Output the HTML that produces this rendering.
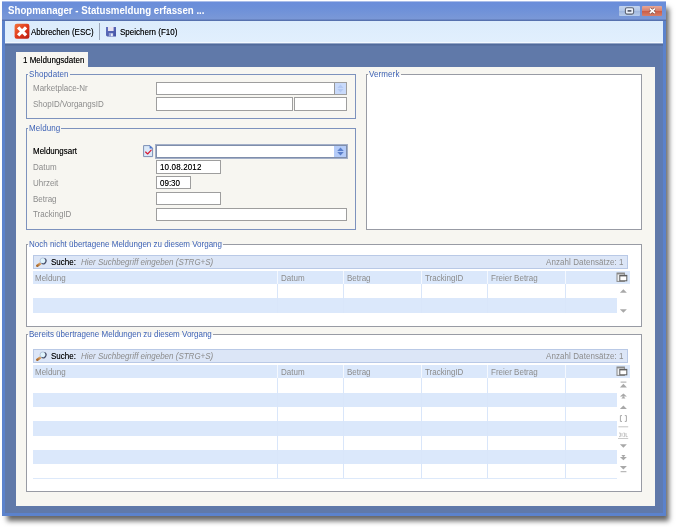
<!DOCTYPE html>
<html>
<head>
<meta charset="utf-8">
<title>Shopmanager - Statusmeldung erfassen ...</title>
<style>
html,body{margin:0;padding:0;}
body{width:677px;height:527px;background:#fff;position:relative;overflow:hidden;font-family:"Liberation Sans",sans-serif;font-size:8px;color:#000;}
div,span,svg{position:absolute;box-sizing:border-box;white-space:nowrap;}
.t{line-height:10px;height:10px;will-change:transform;transform:translateY(.6px) scaleY(1.07);transform-origin:50% 78%;}
#win{left:2px;top:1px;width:664px;height:515px;background:#5b82cc;box-shadow:4px 6px 5px -1px rgba(0,0,0,.6);}
#titlebar{left:2px;top:1px;width:664px;height:20px;background:linear-gradient(#a9bdea 0,#a9bdea 1px,#6a8dda 1px,#6b8fd9 6px,#7a98d7 18px,#5a75b2 19px,#526cab 20px);}
#title{will-change:transform;transform:scaleY(1.03);transform-origin:50% 75%;left:8.4px;top:4px;font-size:9.7px;font-weight:bold;color:#fff;line-height:14px;height:14px;}
#inner{left:5px;top:21px;width:658px;height:492px;background:#6079a9;}
#toolbar{left:5px;top:21px;width:658px;height:25px;background:linear-gradient(#dcecfc 0,#e1effd 21px,#f3f8fe 21px,#f3f8fe 22px,#94a7c8 22px,#94a7c8 23px,#4f6798 23px,#5b74a4 25px);}
#panel{left:16px;top:67px;width:639px;height:439px;background:#f7f6f1;}
#tab{left:16px;top:52px;width:72px;height:16px;background:#f7f6f1;}
.k{text-shadow:0 0 .3px rgba(0,0,0,.55);}
.gb{border:1px solid #7d92bd;}
.gl{color:#3f63b6;background:#f7f6f1;padding:0 1px;letter-spacing:.1px;}
.glw{background:linear-gradient(#f7f6f1 0,#f7f6f1 6px,#fff 6px);}
.lbl{color:#8c8c8c;}
.inp{background:#fff;border:1px solid #9e9e9e;}
.sbar{background:#dce6f7;border:1px solid #b9c9e6;}
.hdr{background:#dbe8fb;}
.brow{background:#dbe8fb;}
.vl{width:1px;background:#d9e6fa;}
.vlh{width:1px;background:#f4f8fe;}
.hl{height:1px;background:#dde9fa;}
</style>
</head>
<body>
<div id="win"></div>
<div id="titlebar"></div>
<div id="title">Shopmanager - Statusmeldung erfassen ...</div>
<div id="inner"></div>
<div style="left:660px;top:44px;width:3px;height:469px;background:#5e7bb2;"></div>
<div id="toolbar"></div>
<div id="tab"></div>
<div id="panel"></div>


<!-- window buttons -->
<div style="left:619px;top:6px;width:21px;height:10px;background:linear-gradient(#c3d4ee,#b3c7e8 45%,#9fb6de 50%,#b7cbea);border-radius:1px;"></div>
<svg style="left:619px;top:6px;" width="21" height="10" viewBox="0 0 21 10"><rect x="6.4" y="1.7" width="8.2" height="6.4" rx="1.6" fill="#e9eff9" stroke="#5e6473" stroke-width="1.1"/><rect x="8.6" y="4.1" width="3.8" height="1.6" fill="#4a5062"/></svg>
<div style="left:642px;top:6px;width:20px;height:10px;background:linear-gradient(#e7a898,#d98370 45%,#cb5a44 50%,#d67f6a);border-radius:1px;"></div>
<svg style="left:647px;top:6px;" width="10" height="10" viewBox="0 0 10 10"><path d="M2.9 2.6 L7.9 7.2 M7.9 2.6 L2.9 7.2" stroke="#7a453d" stroke-width="2.9" fill="none"/><path d="M2.9 2.6 L7.9 7.2 M7.9 2.6 L2.9 7.2" stroke="#fff" stroke-width="1.8" fill="none"/></svg>
<!-- toolbar content -->
<div class="t k" id="tb1" style="left:31px;top:27px;">Abbrechen (ESC)</div>
<div style="left:99px;top:23px;width:1px;height:17px;background:#9aa6b8;"></div>
<div class="t k" id="tb2" style="left:120px;top:27px;">Speichern (F10)</div>

<!-- tab -->
<div class="t k" id="tabt" style="left:23px;top:55px;">1 Meldungsdaten</div>

<!-- Shopdaten -->
<div class="gb" style="left:26px;top:74px;width:330px;height:45px;"></div>
<div class="t gl" id="g1" style="left:28px;top:69px;">Shopdaten</div>
<div class="t lbl" id="l1" style="left:33px;top:83px;">Marketplace-Nr</div>
<div class="t lbl" id="l2" style="left:33px;top:99px;">ShopID/VorgangsID</div>
<div class="inp" style="left:156px;top:82px;width:191px;height:13px;"></div>
<div style="left:334px;top:83px;width:12px;height:11px;background:#c9dafa;border-left:1px solid #979797;"></div>
<div class="inp" style="left:156px;top:97px;width:137px;height:14px;"></div>
<div class="inp" style="left:294px;top:97px;width:53px;height:14px;"></div>

<!-- Meldung -->
<div class="gb" style="left:26px;top:128px;width:330px;height:102px;"></div>
<div class="t gl" id="g2" style="left:28px;top:123px;">Meldung</div>
<div class="t k" id="l3" style="left:33px;top:146px;">Meldungsart</div>
<div class="t lbl" id="l4" style="left:33px;top:162px;">Datum</div>
<div class="t lbl" id="l5" style="left:33px;top:178px;">Uhrzeit</div>
<div class="t lbl" id="l6" style="left:33px;top:194px;">Betrag</div>
<div class="t lbl" id="l7" style="left:33px;top:209px;">TrackingID</div>
<div class="inp" style="left:155px;top:144px;width:193px;height:15px;border:1px solid #a3afc8;box-shadow:inset 0 0 0 1px #7f8eab;"></div>
<div style="left:334px;top:146px;width:12px;height:11px;background:#b4cbf8;"></div>
<div class="inp" style="left:156px;top:160px;width:65px;height:14px;"></div>
<div class="t k" id="v1" style="letter-spacing:.15px;left:160px;top:162px;">10.08.2012</div>
<div class="inp" style="left:156px;top:176px;width:35px;height:13px;"></div>
<div class="t k" id="v2" style="left:160px;top:178px;">09:30</div>
<div class="inp" style="left:156px;top:192px;width:65px;height:13px;"></div>
<div class="inp" style="left:156px;top:208px;width:191px;height:13px;"></div>

<!-- Vermerk -->
<div style="left:366px;top:74px;width:276px;height:156px;background:#fff;border:1px solid #989ba4;"></div>
<div class="t gl glw" id="g3" style="left:368px;top:69px;">Vermerk</div>

<!-- Group 3 -->
<div style="left:26px;top:244px;width:616px;height:83px;background:#fff;border:1px solid #989ba4;"></div>
<div class="t gl glw" id="g4" style="letter-spacing:0;left:28px;top:239px;">Noch nicht übertagene Meldungen zu diesem Vorgang</div>
<div class="sbar" style="left:33px;top:255px;width:595px;height:14px;"></div>
<div class="t k" id="s1" style="left:51px;top:257px;">Suche:</div>
<div class="t lbl" id="p1" style="left:81px;top:257px;font-style:italic;">Hier Suchbegriff eingeben (STRG+S)</div>
<div class="t lbl" id="a1" style="letter-spacing:.08px;left:546px;top:257px;">Anzahl Datensätze: 1</div>
<div class="hdr" style="left:33px;top:271px;width:597px;height:13px;"></div>
<div class="brow" style="left:33px;top:298px;width:584px;height:15px;"></div>
<div class="t lbl" style="left:35px;top:273px;">Meldung</div>
<div class="t lbl" style="left:281px;top:273px;">Datum</div>
<div class="t lbl" style="left:347px;top:273px;">Betrag</div>
<div class="t lbl" style="left:425px;top:273px;">TrackingID</div>
<div class="t lbl" style="left:491px;top:273px;">Freier Betrag</div>

<!-- Group 4 -->
<div style="left:26px;top:334px;width:616px;height:158px;background:#fff;border:1px solid #989ba4;"></div>
<div class="t gl glw" id="g5" style="letter-spacing:0;left:28px;top:329px;">Bereits übertragene Meldungen zu diesem Vorgang</div>
<div class="sbar" style="left:33px;top:349px;width:595px;height:14px;"></div>
<div class="t k" id="s2" style="left:51px;top:351px;">Suche:</div>
<div class="t lbl" id="p2" style="left:81px;top:351px;font-style:italic;">Hier Suchbegriff eingeben (STRG+S)</div>
<div class="t lbl" id="a2" style="letter-spacing:.08px;left:546px;top:351px;">Anzahl Datensätze: 1</div>
<div class="hdr" style="left:33px;top:365px;width:597px;height:13px;"></div>
<div class="brow" style="left:33px;top:393px;width:584px;height:14px;"></div>
<div class="brow" style="left:33px;top:421px;width:584px;height:15px;"></div>
<div class="brow" style="left:33px;top:450px;width:584px;height:14px;"></div>
<div class="hl" style="left:33px;top:478px;width:584px;"></div>
<div class="t lbl" style="left:35px;top:367px;">Meldung</div>
<div class="t lbl" style="left:281px;top:367px;">Datum</div>
<div class="t lbl" style="left:347px;top:367px;">Betrag</div>
<div class="t lbl" style="left:425px;top:367px;">TrackingID</div>
<div class="t lbl" style="left:491px;top:367px;">Freier Betrag</div>

<!-- table decorations -->
<svg style="left:35px;top:257px;" width="13" height="11" viewBox="0 0 13 11">
  <defs><linearGradient id="mh257" x1="1" y1="0" x2="0" y2="1"><stop offset="0" stop-color="#e0a868"/><stop offset="1" stop-color="#a8682c"/></linearGradient></defs>
  <path d="M5.4 6.4 L2.3 8.8" stroke="url(#mh257)" stroke-width="2.5" stroke-linecap="round"/>
  <circle cx="7.9" cy="3.8" r="2.9" fill="#dff4fc" stroke="#b4c4dc" stroke-width="1"/>
  <path d="M9.6 1.4 A2.9 2.9 0 0 1 6.6 6.4" stroke="#434a64" stroke-width="1.1" fill="none"/>
</svg>
<svg style="left:35px;top:351px;" width="13" height="11" viewBox="0 0 13 11">
  <defs><linearGradient id="mh351" x1="1" y1="0" x2="0" y2="1"><stop offset="0" stop-color="#e0a868"/><stop offset="1" stop-color="#a8682c"/></linearGradient></defs>
  <path d="M5.4 6.4 L2.3 8.8" stroke="url(#mh351)" stroke-width="2.5" stroke-linecap="round"/>
  <circle cx="7.9" cy="3.8" r="2.9" fill="#dff4fc" stroke="#b4c4dc" stroke-width="1"/>
  <path d="M9.6 1.4 A2.9 2.9 0 0 1 6.6 6.4" stroke="#434a64" stroke-width="1.1" fill="none"/>
</svg>
<svg style="left:616px;top:272px;" width="12" height="11" viewBox="0 0 12 11">
  <rect x="1" y="1" width="7.4" height="8.4" fill="#eef0f2" stroke="#8a8a8a" stroke-width="1"/>
  <rect x="1" y="1" width="7.4" height="1.4" fill="#8a8a8a"/>
  <rect x="3.8" y="3.4" width="7" height="5.4" fill="#fff" stroke="#5e5e5e" stroke-width="1"/>
  <rect x="3.8" y="3.2" width="7" height="1.2" fill="#5e5e5e"/>
</svg>
<svg style="left:616px;top:366px;" width="12" height="11" viewBox="0 0 12 11">
  <rect x="1" y="1" width="7.4" height="8.4" fill="#eef0f2" stroke="#8a8a8a" stroke-width="1"/>
  <rect x="1" y="1" width="7.4" height="1.4" fill="#8a8a8a"/>
  <rect x="3.8" y="3.4" width="7" height="5.4" fill="#fff" stroke="#5e5e5e" stroke-width="1"/>
  <rect x="3.8" y="3.2" width="7" height="1.2" fill="#5e5e5e"/>
</svg>
<div class="vlh" style="left:277px;top:271px;height:13px;"></div>
<div class="vlh" style="left:343px;top:271px;height:13px;"></div>
<div class="vlh" style="left:421px;top:271px;height:13px;"></div>
<div class="vlh" style="left:487px;top:271px;height:13px;"></div>
<div class="vlh" style="left:565px;top:271px;height:13px;"></div>
<div class="vl" style="left:277px;top:284px;height:29px;"></div>
<div class="vl" style="left:343px;top:284px;height:29px;"></div>
<div class="vl" style="left:421px;top:284px;height:29px;"></div>
<div class="vl" style="left:487px;top:284px;height:29px;"></div>
<div class="vl" style="left:565px;top:284px;height:29px;"></div>

<div class="vlh" style="left:277px;top:365px;height:13px;"></div>
<div class="vlh" style="left:343px;top:365px;height:13px;"></div>
<div class="vlh" style="left:421px;top:365px;height:13px;"></div>
<div class="vlh" style="left:487px;top:365px;height:13px;"></div>
<div class="vlh" style="left:565px;top:365px;height:13px;"></div>
<div class="vl" style="left:277px;top:378px;height:100px;"></div>
<div class="vl" style="left:343px;top:378px;height:100px;"></div>
<div class="vl" style="left:421px;top:378px;height:100px;"></div>
<div class="vl" style="left:487px;top:378px;height:100px;"></div>
<div class="vl" style="left:565px;top:378px;height:100px;"></div>

<svg style="left:0;top:0;" width="677" height="527" viewBox="0 0 677 527" fill="#a8a8a8"><path d="M623.4 289.3 L626.9 292.8 H619.9 Z"/><path d="M623.4 312.8 L626.9 309.3 H619.9 Z"/></svg>
<svg style="left:0;top:0;" width="677" height="527" viewBox="0 0 677 527" fill="#a8a8a8">
<rect x="620.6" y="381.6" width="5.8" height="1"/><path d="M623.4 383.8 L626.9 387.6 H619.9 Z"/>
<path d="M623.4 393.6 L626.9 396.6 H619.9 Z"/><path d="M623.4 396.0 L625.4 398.6 H621.4 Z"/>
<path d="M623.4 405.5 L626.9 409 H619.9 Z"/>
<path d="M622 415.6 H620.4 V421.4 H622 M624.8 415.6 H626.4 V421.4 H624.8" stroke="#a8a8a8" stroke-width="1" fill="none"/>
<rect x="618.4" y="426.3" width="9.8" height="1" fill="#c4c4c4"/>
<path d="M619 433 h1.4 v3.6 h-1.4 M622 433 v3.6 M623.4 433 h1.2 v3.6 h-1.2 M626 433 v3.6 h1.6" stroke="#c0c0c0" stroke-width=".9" fill="none"/>
<rect x="618" y="438" width="10.2" height=".9" fill="#c4c4c4"/>
<path d="M623.4 447.8 L626.9 444.2 H619.9 Z"/>
<path d="M623.4 460.2 L626.9 457 H619.9 Z"/><path d="M623.4 457.6 L625.4 455 H621.4 Z"/>
<path d="M623.4 469.6 L626.9 466 H619.9 Z"/><rect x="620.6" y="471.2" width="5.8" height="1"/>
</svg>

<!-- icons -->
<svg style="left:14px;top:23px;" width="17" height="17" viewBox="0 0 17 17">
  <defs><linearGradient id="rx" x1="0" y1="0" x2="1" y2="1"><stop offset="0" stop-color="#f4743a"/><stop offset=".5" stop-color="#e03a1c"/><stop offset="1" stop-color="#b81a10"/></linearGradient></defs>
  <rect x=".6" y=".8" width="14.8" height="14.9" rx="2.2" fill="url(#rx)"/>
  <path d="M5.3 5.6 L10.9 11.2 M10.9 5.6 L5.3 11.2" stroke="#fff" stroke-width="3.3" stroke-linecap="square" fill="none"/>
</svg>
<svg style="left:105px;top:26px;" width="13" height="12" viewBox="0 0 13 12">
  <defs><linearGradient id="sv" x1="0" y1="0" x2="1" y2="1"><stop offset="0" stop-color="#6272c0"/><stop offset="1" stop-color="#4553a4"/></linearGradient></defs><path d="M1 1 H11 V10.6 H2.2 L1 9.4 Z" fill="url(#sv)"/>
  <rect x="3" y="1" width="5.6" height="4" fill="#e8e2f0"/>
  <rect x="3.8" y="7" width="4.4" height="3.6" fill="#95a1d6"/>
  <rect x="6.2" y="7.6" width="1.4" height="2.6" fill="#fff"/>
</svg>
<svg style="left:142px;top:144px;" width="13" height="14" viewBox="0 0 13 14">
  <path d="M1.6 1.6 H8 L10.6 4.2 V12.6 H1.6 Z" fill="#dbe9f9" stroke="#7c90b4" stroke-width="1"/>
  <path d="M7.6 1.2 L11 4.6 H7.6 Z" fill="#4a72cc"/>
  <path d="M3.6 8 L5.6 10 L9.2 6.2" stroke="#d81830" stroke-width="1.15" fill="none" stroke-linecap="round" stroke-linejoin="round"/>
</svg>
<!-- combo arrows -->
<svg style="left:335px;top:83px;" width="12" height="11" viewBox="0 0 12 11">
  <path d="M5.5 1.6 L8.6 5 H2.4 Z M5.5 9.4 L8.6 6 H2.4 Z" fill="#b3c8f2"/>
</svg>
<svg style="left:335px;top:146px;" width="12" height="11" viewBox="0 0 12 11">
  <path d="M5.5 1.6 L8.8 5.1 H2.2 Z M5.5 9.6 L8.8 6.1 H2.2 Z" fill="#5b7fca"/>
</svg>
</body>
</html>
